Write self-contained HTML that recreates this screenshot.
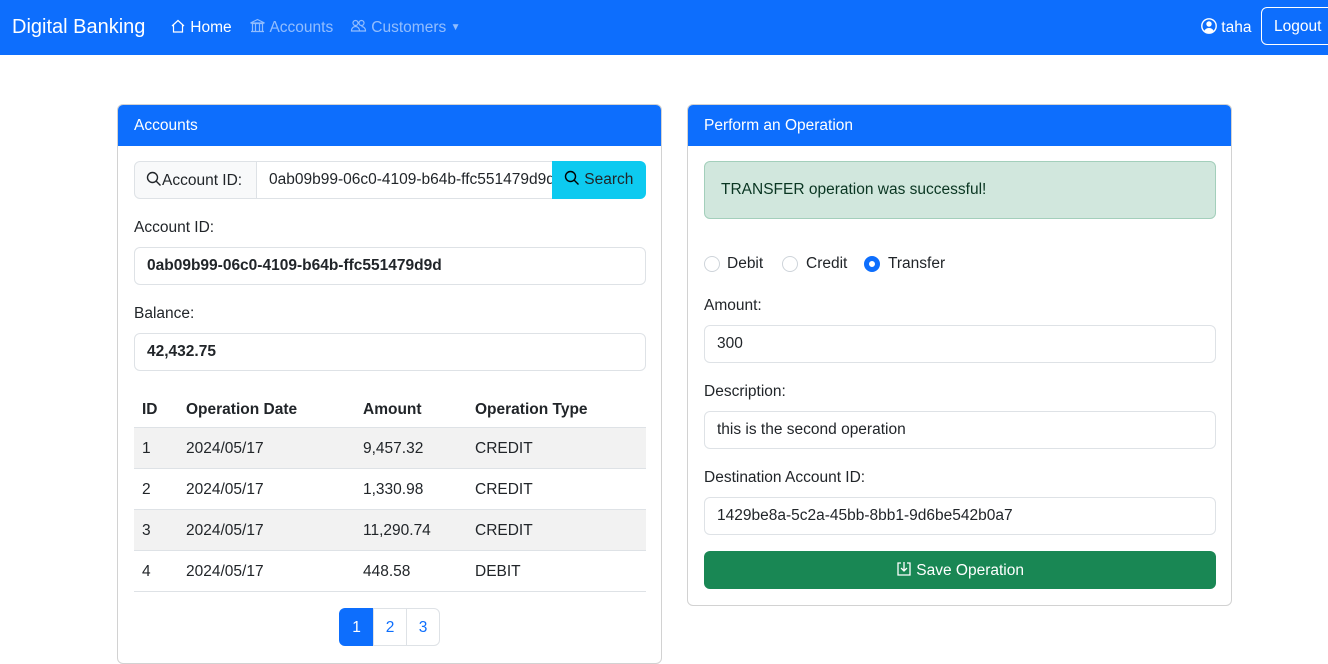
<!DOCTYPE html>
<html><head><meta charset="utf-8"><style>
*{box-sizing:border-box;margin:0;padding:0}
body{width:1328px;height:640px;overflow:hidden;background:#fff;font-family:"Segoe UI","Liberation Sans",sans-serif;font-size:15.5px;color:#212529;position:relative}
.nav{position:absolute;left:0;top:0;width:1328px;height:55px;background:#0d6efd;color:#fff}
.nav span{position:absolute;top:18px;white-space:nowrap}
.card{position:absolute;top:104px;width:545px;border:1px solid rgba(0,0,0,.175);border-radius:6px;overflow:hidden}
.ch{height:41px;background:#0d6efd;color:#fff;padding:12px 16px}
.abs{position:absolute}
.inp{position:absolute;height:38px;border:1px solid #dee2e6;border-radius:6px;padding:9px 12px;white-space:nowrap;overflow:hidden}
.lbl{position:absolute}
.row{position:absolute;left:16px;width:512px;height:41px;border-bottom:1px solid #dee2e6}
.row span{position:absolute;top:12px}
.radio{position:absolute;width:16px;height:16px;border:1px solid #ced4da;border-radius:50%;top:151px}
</style></head><body>
<div class="nav">
<span style="left:12px;top:16px;font-size:20px">Digital Banking</span>
<span style="left:170px"><svg width="16" height="16" viewBox="0 0 16 16" fill="none" stroke="#fff" stroke-width="1.2" style="vertical-align:-2px"><path d="M2 8L8 2.5L14 8M3.5 6.8V14H12.5V6.8"/></svg> Home</span>
<span style="left:249px;color:rgba(255,255,255,.55)"><svg width="17" height="16" viewBox="0 0 16 16" fill="none" stroke="currentColor" stroke-width="1.2" style="vertical-align:-2px"><path d="M1 5L8 1.5L15 5ZM2 5.5H14M3 6V13M6 6V13M10 6V13M13 6V13M1.5 13.5H14.5"/></svg> Accounts</span>
<span style="left:350px;color:rgba(255,255,255,.55)"><svg width="17" height="16" viewBox="0 0 16 16" fill="none" stroke="currentColor" stroke-width="1.2" style="vertical-align:-2px"><circle cx="5" cy="5" r="2.5"/><circle cx="11" cy="5" r="2.5"/><path d="M1 13c0-3 2-4.5 4-4.5s4 1.5 4 4.5ZM9 13h6c0-3-2-4.5-4-4.5"/></svg> Customers <span style="position:static;font-size:10px;vertical-align:2px">&#9660;</span></span>
<span style="left:1201px"><svg width="16" height="16" viewBox="0 0 16 16" style="vertical-align:-2px"><circle cx="8" cy="8" r="7.2" fill="none" stroke="#fff" stroke-width="1.4"/><circle cx="8" cy="6" r="2.7" fill="#fff"/><path d="M3.3 12.8C4.5 10.8 6 10 8 10s3.5.8 4.7 2.8A6.5 6.5 0 0 1 3.3 12.8Z" fill="#fff"/></svg> taha</span>
<div class="abs" style="left:1261px;top:7px;width:80px;height:38px;border:1px solid #fff;border-radius:6px;padding:10px 12px">Logout</div>
</div>

<div class="card" style="left:117px;height:560px">
<div class="ch">Accounts</div>
<div class="abs" style="left:16px;top:56px;width:123px;height:38px;background:#f8f9fa;border:1px solid #dee2e6;border-radius:6px 0 0 6px;padding:9px 11px;white-space:nowrap"><svg width="16" height="16" viewBox="0 0 16 16" fill="none" stroke="#212529" stroke-width="1.4" style="vertical-align:-2px"><circle cx="6.5" cy="6.5" r="5"/><path d="M10 10L14.5 14.5"/></svg>Account ID:</div>
<div class="inp" style="left:138px;top:56px;width:297px;border-radius:0">0ab09b99-06c0-4109-b64b-ffc551479d9d</div>
<div class="abs" style="left:434px;top:56px;width:94px;height:38px;background:#0dcaf0;border-radius:0 6px 6px 0;padding:9px 12px;white-space:nowrap"><svg width="16" height="16" viewBox="0 0 16 16" fill="none" stroke="#000" stroke-width="1.4" style="vertical-align:-2px"><circle cx="6.5" cy="6.5" r="5"/><path d="M10 10L14.5 14.5"/></svg> Search</div>
<div class="lbl" style="left:16px;top:114px">Account ID:</div>
<div class="inp" style="left:16px;top:142px;width:512px;font-weight:bold">0ab09b99-06c0-4109-b64b-ffc551479d9d</div>
<div class="lbl" style="left:16px;top:200px">Balance:</div>
<div class="inp" style="left:16px;top:228px;width:512px;font-weight:bold">42,432.75</div>
<div class="row" style="top:284px;font-weight:bold;height:39px"><span style="left:8px">ID</span><span style="left:52px">Operation Date</span><span style="left:229px">Amount</span><span style="left:341px">Operation Type</span></div>
<div class="row" style="top:323px;background:#f2f2f2"><span style="left:8px">1</span><span style="left:52px">2024/05/17</span><span style="left:229px">9,457.32</span><span style="left:341px">CREDIT</span></div>
<div class="row" style="top:364px"><span style="left:8px">2</span><span style="left:52px">2024/05/17</span><span style="left:229px">1,330.98</span><span style="left:341px">CREDIT</span></div>
<div class="row" style="top:405px;background:#f2f2f2"><span style="left:8px">3</span><span style="left:52px">2024/05/17</span><span style="left:229px">11,290.74</span><span style="left:341px">CREDIT</span></div>
<div class="row" style="top:446px"><span style="left:8px">4</span><span style="left:52px">2024/05/17</span><span style="left:229px">448.58</span><span style="left:341px">DEBIT</span></div>
<div class="abs" style="left:221px;top:503px;width:35px;height:38px;background:#0d6efd;color:#fff;border-radius:6px 0 0 6px;text-align:center;padding-top:11px">1</div>
<div class="abs" style="left:255px;top:503px;width:34px;height:38px;border:1px solid #dee2e6;color:#0d6efd;text-align:center;padding-top:10px">2</div>
<div class="abs" style="left:288px;top:503px;width:34px;height:38px;border:1px solid #dee2e6;border-radius:0 6px 6px 0;color:#0d6efd;text-align:center;padding-top:10px">3</div>
</div>

<div class="card" style="left:687px;height:502px">
<div class="ch">Perform an Operation</div>
<div class="abs" style="left:16px;top:56px;width:512px;height:58px;background:#d1e7dd;border:1px solid #a3cfbb;border-radius:6px;color:#0a3622;padding:19px 16px">TRANSFER operation was successful!</div>
<div class="radio" style="left:16px"></div><div class="lbl" style="left:39px;top:150px">Debit</div>
<div class="radio" style="left:94px"></div><div class="lbl" style="left:118px;top:150px">Credit</div>
<div class="radio" style="left:176px;border:5px solid #0d6efd;background:#fff"></div><div class="lbl" style="left:200px;top:150px">Transfer</div>
<div class="lbl" style="left:16px;top:192px">Amount:</div>
<div class="inp" style="left:16px;top:220px;width:512px">300</div>
<div class="lbl" style="left:16px;top:278px">Description:</div>
<div class="inp" style="left:16px;top:306px;width:512px">this is the second operation</div>
<div class="lbl" style="left:16px;top:364px">Destination Account ID:</div>
<div class="inp" style="left:16px;top:392px;width:512px">1429be8a-5c2a-45bb-8bb1-9d6be542b0a7</div>
<div class="abs" style="left:16px;top:446px;width:512px;height:38px;background:#198754;color:#fff;border-radius:6px;text-align:center;padding-top:10px"><svg width="16" height="16" viewBox="0 0 16 16" fill="none" stroke="#fff" stroke-width="1.3" style="vertical-align:-2px"><path d="M5 2H2v12h12V2h-3M8 1v9M5 7l3 3 3-3"/></svg> Save Operation</div>
</div>
</body></html>
